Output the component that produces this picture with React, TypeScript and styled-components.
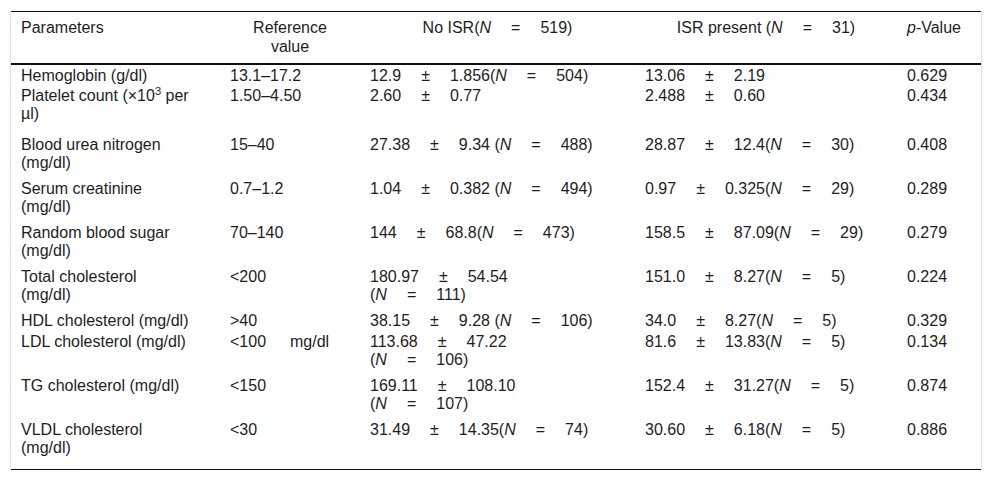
import React from "react";
import styled, { createGlobalStyle } from "styled-components";

const Global = createGlobalStyle`
  html, body { margin: 0; padding: 0; background: #ffffff; }
  body { font-family: "Liberation Sans", Arial, Helvetica, sans-serif; }
`;

const Frame = styled.div`
  box-sizing: border-box;
  width: 972px;
  margin: 11px 0 0 10px;
  border-left: 1px solid #e2e2e2;
  border-right: 1px solid #e2e2e2;
`;

const Table = styled.table`
  width: 100%;
  border-collapse: collapse;
  table-layout: fixed;
  font-size: 16px;
  color: #1e1e1e;
  border-top: 1px solid #111111;
  border-bottom: 1px solid #111111;
`;

const Col = styled.col<{ $w: number }>`
  width: ${(p) => p.$w}px;
`;

const HeadCell = styled.th<{ $align?: string }>`
  font-weight: normal;
  text-align: ${(p) => p.$align ?? "center"};
  vertical-align: top;
  padding: 6px 10px 7px;
  line-height: 19px;
  border-bottom: 2px solid #111111;
  white-space: nowrap;
`;

const Row = styled.tr<{ $pb: number }>`
  & > td {
    padding-bottom: ${(p) => p.$pb}px;
  }
`;

const Cell = styled.td`
  vertical-align: top;
  padding: 2px 10px 1px;
  line-height: 18px;
  white-space: nowrap;
`;

const Op = styled.span`
  margin: 0 1.25em;
`;

const Ital = styled.i`
  font-style: italic;
`;

const Sup = styled.sup`
  font-size: 0.7em;
  line-height: 0;
  vertical-align: 0.55em;
`;

function rich(s: string): React.ReactNode[] {
  return s
    .split(/(±|=|\{N\}|\{p\}|\^3|\n)/)
    .filter((t) => t !== "")
    .map((t, i) => {
      if (t === "±" || t === "=") return <Op key={i}>{t}</Op>;
      if (t === "{N}") return <Ital key={i}>N</Ital>;
      if (t === "{p}") return <Ital key={i}>p</Ital>;
      if (t === "^3") return <Sup key={i}>3</Sup>;
      if (t === "\n") return <br key={i} />;
      return <React.Fragment key={i}>{t}</React.Fragment>;
    });
}

const widths = [209, 140, 275, 262, 84];

const headers: { text: string; align?: string }[] = [
  { text: "Parameters", align: "left" },
  { text: "Reference\nvalue" },
  { text: "No ISR({N}=519)" },
  { text: "ISR present ({N}=31)" },
  { text: "{p}-Value", align: "left" },
];

type RowData = { pb: number; cells: string[] };

const rows: RowData[] = [
  { pb: 0, cells: ["Hemoglobin (g/dl)", "13.1–17.2", "12.9±1.856({N}=504)", "13.06±2.19", "0.629"] },
  { pb: 11, cells: ["Platelet count (×10^3 per\nµl)", "1.50–4.50", "2.60±0.77", "2.488±0.60", "0.434"] },
  { pb: 6, cells: ["Blood urea nitrogen\n(mg/dl)", "15–40", "27.38±9.34 ({N}=488)", "28.87±12.4({N}=30)", "0.408"] },
  { pb: 6, cells: ["Serum creatinine\n(mg/dl)", "0.7–1.2", "1.04±0.382 ({N}=494)", "0.97±0.325({N}=29)", "0.289"] },
  { pb: 6, cells: ["Random blood sugar\n(mg/dl)", "70–140", "144±68.8({N}=473)", "158.5±87.09({N}=29)", "0.279"] },
  { pb: 6, cells: ["Total cholesterol\n(mg/dl)", "<200", "180.97±54.54\n({N}=111)", "151.0±8.27({N}=5)", "0.224"] },
  { pb: 1, cells: ["HDL cholesterol (mg/dl)", ">40", "38.15±9.28 ({N}=106)", "34.0±8.27({N}=5)", "0.329"] },
  { pb: 6, cells: ["LDL cholesterol (mg/dl)", "<100\u2003\u2002mg/dl", "113.68±47.22\n({N}=106)", "81.6±13.83({N}=5)", "0.134"] },
  { pb: 6, cells: ["TG cholesterol (mg/dl)", "<150", "169.11±108.10\n({N}=107)", "152.4±31.27({N}=5)", "0.874"] },
  { pb: 12, cells: ["VLDL cholesterol\n(mg/dl)", "<30", "31.49±14.35({N}=74)", "30.60±6.18({N}=5)", "0.886"] },
];

export default function App() {
  return (
    <>
      <Global />
      <Frame>
        <Table>
          <colgroup>
            {widths.map((w, i) => (
              <Col key={i} $w={w} />
            ))}
          </colgroup>
          <thead>
            <tr>
              {headers.map((h, i) => (
                <HeadCell key={i} $align={h.align}>
                  {rich(h.text)}
                </HeadCell>
              ))}
            </tr>
          </thead>
          <tbody>
            {rows.map((r, ri) => (
              <Row key={ri} $pb={r.pb}>
                {r.cells.map((c, ci) => (
                  <Cell key={ci}>{rich(c)}</Cell>
                ))}
              </Row>
            ))}
          </tbody>
        </Table>
      </Frame>
    </>
  );
}
